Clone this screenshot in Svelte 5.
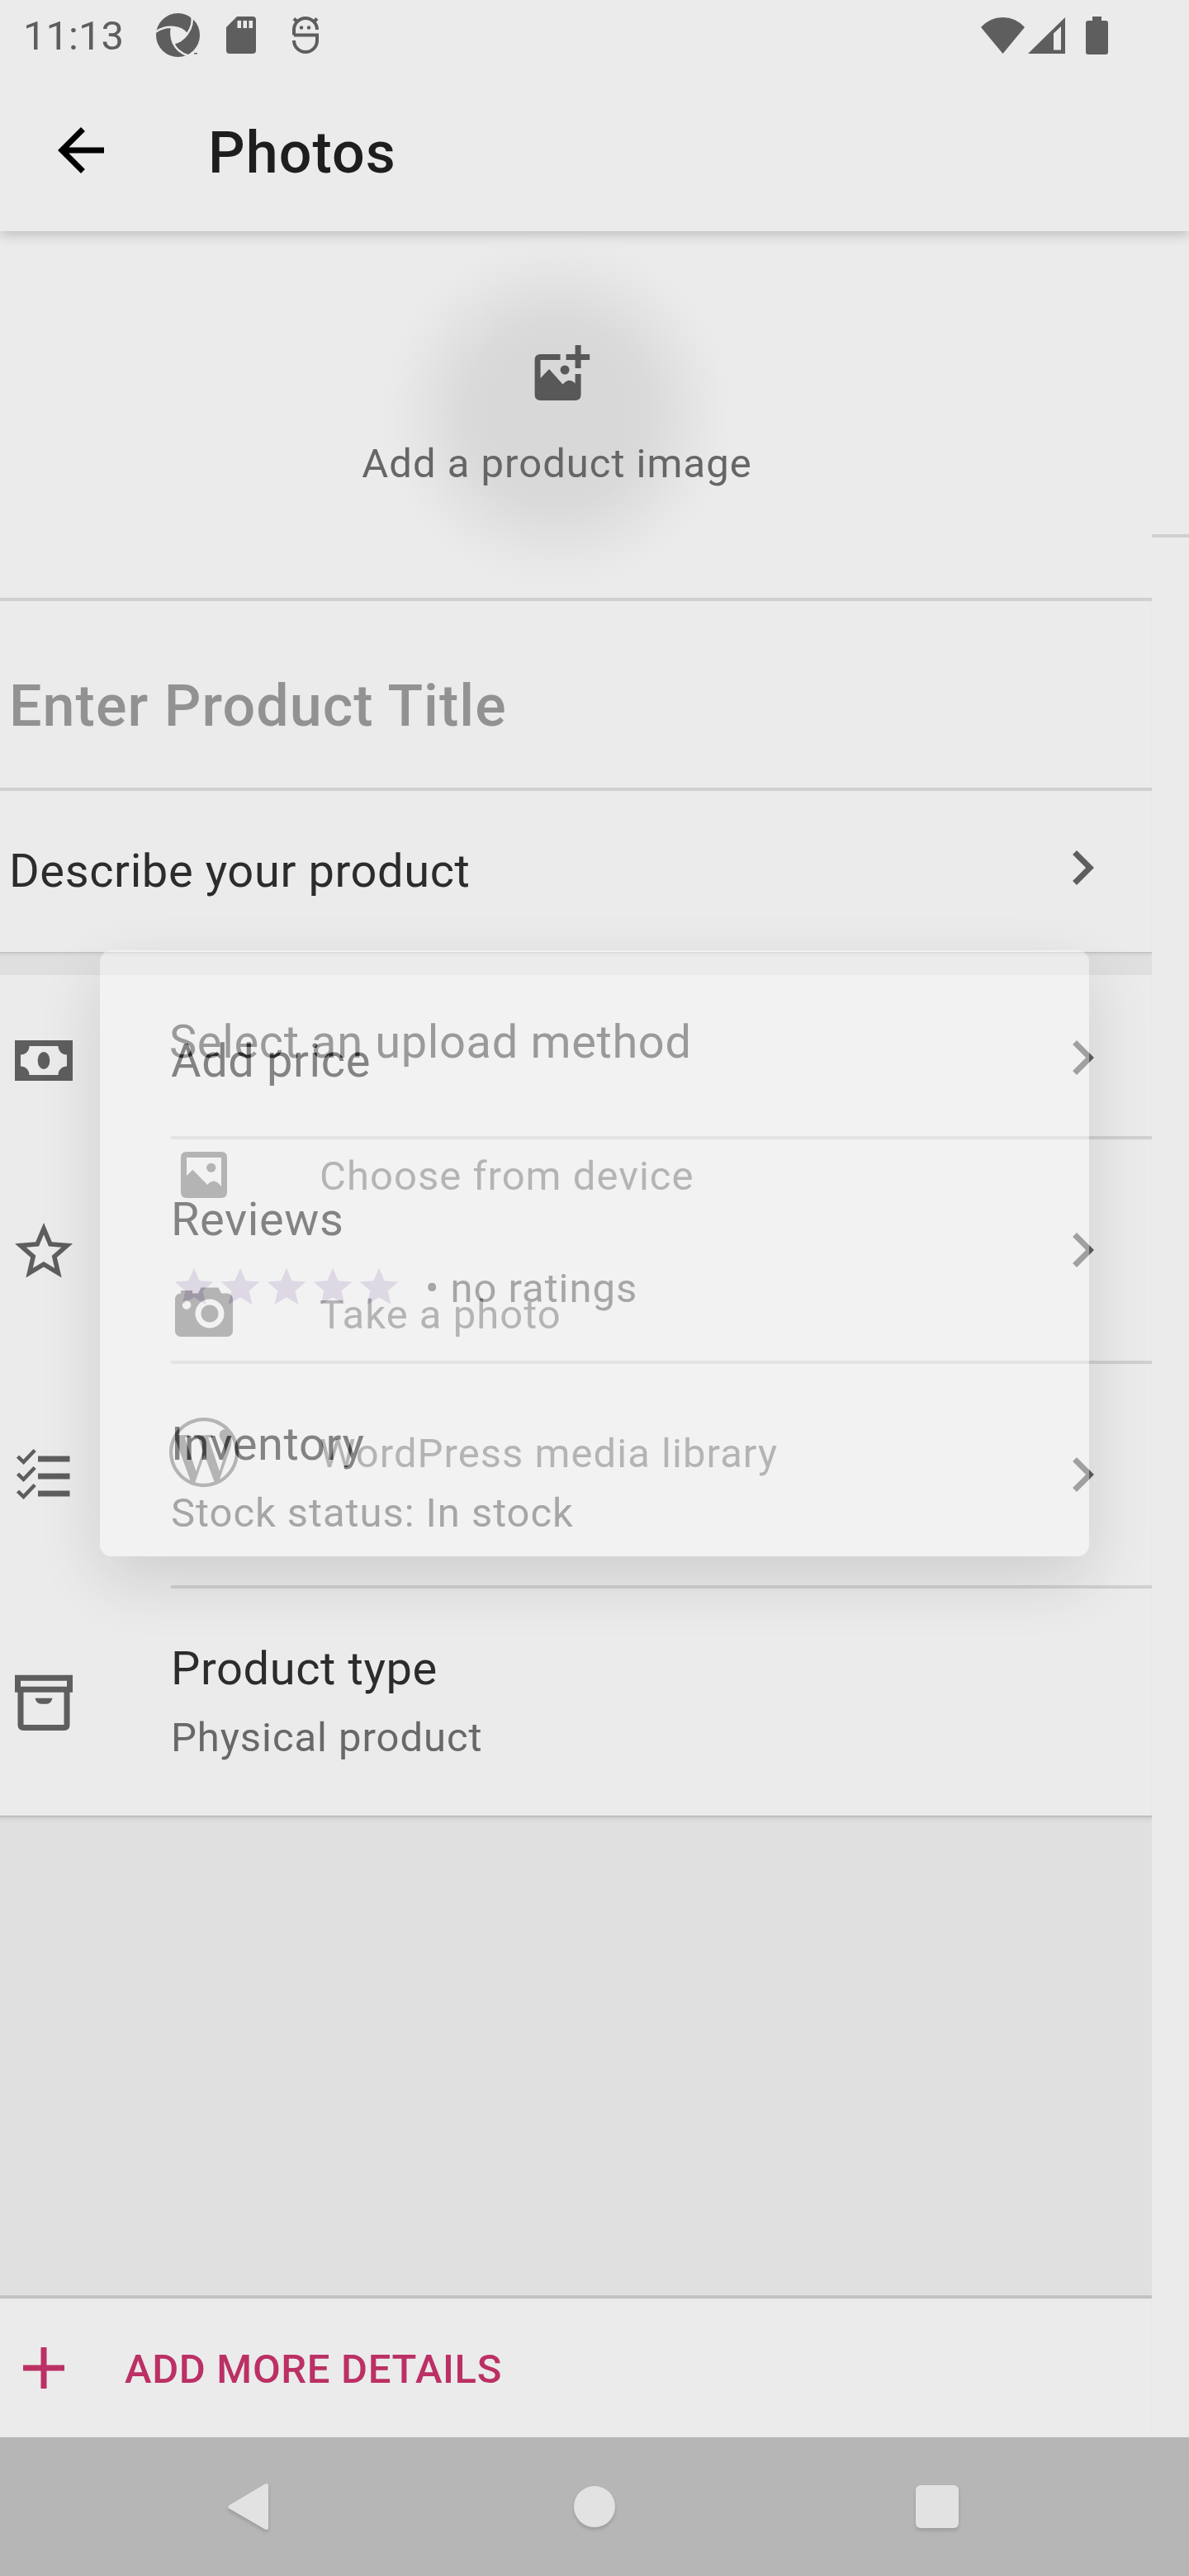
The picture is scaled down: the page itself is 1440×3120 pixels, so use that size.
<script>
  const sections = [
    { icon: 'cash', title: 'Add price', kind: 'price', chevron: true },
    { icon: 'star', title: 'Reviews', kind: 'reviews', note: '• no ratings', chevron: true },
    { icon: 'list', title: 'Inventory', kind: 'inventory', note: 'Stock status: In stock', chevron: true },
    { icon: 'box', title: 'Product type', kind: 'type', note: 'Physical product', chevron: false }
  ];
  const uploads = [
    { icon: 'image', label: 'Choose from device' },
    { icon: 'camera', label: 'Take a photo' },
    { icon: 'wordpress', label: 'WordPress media library' }
  ];
</script>

{#snippet chevron()}
  <svg class="icon chevron" viewBox="0 0 24 24"><path d="M8.590 16.590 13.170 12 8.590 7.410 10 6l6 6-6 6z" /></svg>
{/snippet}

<div class="screen">
  <header class="top">
    <div class="status">
      <span class="time">11:13</span>
      <svg class="aperture" viewBox="0 0 54 54">
        <circle cx="26.500" cy="26.500" r="26.500" />
        <path class="cut" d="M19 17.500Q17.500 27 21 36.500Q31 34 37.500 25.500Q31 17 19 17.500Z" />
        <path class="line" d="M0 22.500Q10 15.500 22 17Q32 18 37.500 25.500M43 2Q46 14 37.500 25.500Q31 34.500 21 36.500M38 51Q26 47 21 36.500Q17 27 19 17.500" />
        <path class="cut" d="M36 52 43 48H54V54H36Z" />
        <path d="M46 48H50V49.500H46Z" />
      </svg>
      <svg class="sd" viewBox="0 0 36 45">
        <path fill-rule="evenodd" d="M13 0H32Q36 0 36 4V41Q36 45 32 45H4Q0 45 0 41V13ZM13.500 5V14H18V5ZM20.500 5V14H25V5ZM27.500 5V14H32V5Z" />
      </svg>
      <svg class="creature" viewBox="0 0 32 45">
        <path class="stroke" d="M2 22.500V16A14 14 0 0 1 30 16M2 22.500H30V29A14 14 0 0 1 2 29M5.500 6 2 2.500M26.500 6 30 2.500" />
        <circle cx="11" cy="13.500" r="2.200" /><circle cx="20" cy="13.500" r="2.200" />
      </svg>
      <span class="spacer"></span>
      <svg class="wifi" viewBox="0 0 53 44"><path d="M0 12Q11 0 26.500 0T53 12L26.500 44Z" /></svg>
      <svg class="signal" viewBox="0 0 45 44"><path fill-rule="evenodd" d="M45 0V44H0ZM31 19.500V39.500H40V11Z" /></svg>
      <svg class="battery" viewBox="0 0 27 46"><path d="M8 0H19V5H24Q27 5 27 8V43Q27 46 24 46H3Q0 46 0 43V8Q0 5 3 5H8Z" /></svg>
    </div>
    <div class="appbar">
      <svg class="icon back" viewBox="0 0 24 24"><path d="M20 11H7.830l5.590-5.590L12 4l-8 8 8 8 1.410-1.410L7.830 13H20z" /></svg>
      <h1>Photos</h1>
    </div>
  </header>

  <div class="body">
    <main>
      <section class="photo">
        <svg class="addimage" viewBox="-12.600 0 79.200 67">
          <path fill-rule="evenodd" d="M7 11H31V18H7V40L17.500 29 34 47.500Q41.500 38.500 49 46.500V35H56V60Q56 67 49 67H7Q0 67 0 60V18Q0 11 7 11Z" />
          <path d="M49 0H56V11H66.600V18H56V28H49V18H38V11H49Z" />
          <circle cx="36.500" cy="30" r="5.500" />
        </svg>
        <p>Add a product image</p>
      </section>
      <section class="title edged">Enter Product Title</section>
      <section class="describe edged"><span>Describe your product</span>{@render chevron()}</section>
      <div class="gap"></div>

      <div class="details edged">
        {#each sections as row}
          <section class="row {row.kind}">
            <svg class="icon" viewBox="0 0 24 24">
              {#if row.icon === 'cash'}
                <path fill-rule="evenodd" d="M2 6H22V20H2ZM7 8C7 9.700 5.700 11 4 11V15C5.700 15 7 16.300 7 18H17C17 16.300 18.300 15 20 15V11C18.300 11 17 9.700 17 8Z" />
                <ellipse cx="12" cy="13" rx="2.100" ry="3" />
              {:else if row.icon === 'star'}
                <path d="M22 9.240l-7.190-.62L12 2 9.190 8.630 2 9.240l5.460 4.730L5.820 21 12 17.270 18.180 21l-1.630-7.030L22 9.240zM12 15.400l-3.760 2.270 1-4.280-3.320-2.880 4.380-.38L12 6.100l1.710 4.040 4.380.38-3.320 2.880 1 4.280L12 15.400z" />
              {:else if row.icon === 'list'}
                <path d="M10 5H21V7H10ZM10 11H21V13H10ZM10 17H21V19H10Z" />
                <path class="checks" d="M3 5.200 5 7.100 8.900 3M3 11.200 5 13.100 8.900 9M3 17.200 5 19.100 8.900 15" />
              {:else}
                <path fill-rule="evenodd" d="M2 2.500H22V8.500H21V19.700Q21 21.700 19 21.700H5Q3 21.700 3 19.700V8.500H2ZM4 4.500V6.500H20V4.500ZM5 8.500V19.700H19V8.500ZM9 10.500H15Q14.500 12.500 13 12.500H11Q9.500 12.500 9 10.500Z" />
              {/if}
            </svg>
            <div class="content">
              <div class="text">
                <h2>{row.title}</h2>
                {#if row.kind === 'reviews'}
                  <div class="rating">
                    {#each Array(5) as _}
                      <svg class="ratingstar" viewBox="0 0 24 24"><path d="M12 17.270 18.180 21l-1.640-7.030L22 9.240l-7.190-.61L12 2 9.190 8.630 2 9.240l5.460 4.730L5.820 21z" /></svg>
                    {/each}
                    <span class="note">{row.note}</span>
                  </div>
                {:else if row.note}
                  <p>{row.note}</p>
                {/if}
              </div>
              {#if row.chevron}{@render chevron()}{/if}
            </div>
          </section>
        {/each}
      </div>

      <div class="void"></div>

      <button class="more edged">
        <svg class="plus" viewBox="0 0 50 50"><path d="M21.500 0H28.500V21.500H50V28.500H28.500V50H21.500V28.500H0V21.500H21.500Z" /></svg>
        <span>ADD MORE DETAILS</span>
      </button>
    </main>
    <aside><div class="rule"></div></aside>
  </div>

  <nav>
    <svg viewBox="0 0 70 70"><path d="M8 33 51 7.500Q55 6 55 10V60Q55 64 51 62.500L8 37.500Q4.500 35.500 8 33Z" /></svg>
    <svg viewBox="0 0 70 70"><circle cx="35" cy="35" r="25" /></svg>
    <svg viewBox="0 0 70 70"><rect x="9" y="9" width="52" height="52" rx="6" /></svg>
  </nav>

  <div class="dialog">
    <h3>Select an upload method</h3>
    {#each uploads as item}
      <div class="option">
        <svg class="icon" viewBox="0 0 24 24">
          {#if item.icon === 'image'}
            <path fill-rule="evenodd" d="M6 4H18Q20 4 20 6V18Q20 20 18 20H6Q4 20 4 18V6Q4 4 6 4ZM6 6V12.300L8.100 10.200 13.200 15.400Q15.500 12.600 18 16V6Z" />
            <circle cx="14.500" cy="9.500" r="1.600" />
          {:else if item.icon === 'camera'}
            <path fill-rule="evenodd" d="M17 12c0 1.700-1.300 3-3 3s-3-1.300-3-3 1.300-3 3-3 3 1.300 3 3zm5-5v11c0 1.100-.9 2-2 2H4c-1.100 0-2-.9-2-2V7c0-1.100.9-2 2-2V4h4v1h2l1-2h6l1 2h2c1.100 0 2 .9 2 2zM7.500 9c0-.830-.670-1.500-1.500-1.500S4.500 8.170 4.500 9s.670 1.500 1.500 1.500S7.500 9.830 7.500 9zM19 12c0-2.760-2.240-5-5-5s-5 2.240-5 5 2.240 5 5 5 5-2.240 5-5z" />
          {:else}
            <path fill-rule="evenodd" d="M21.469 6.825c.84 1.537 1.318 3.300 1.318 5.175 0 3.979-2.156 7.456-5.363 9.325l3.295-9.527c.615-1.540.82-2.771.82-3.864 0-.405-.026-.780-.070-1.110m-7.981.105c.647-.030 1.232-.105 1.232-.105.582-.075.514-.930-.067-.899 0 0-1.755.135-2.880.135-1.064 0-2.850-.150-2.850-.150-.585-.030-.661.855-.075.885 0 0 .540.061 1.125.090l1.680 4.605-2.370 7.080L5.354 6.900c.649-.030 1.234-.100 1.234-.100.585-.075.516-.930-.065-.896 0 0-1.746.138-2.874.138-.200 0-.438-.008-.690-.015C4.911 3.150 8.235 1.215 12 1.215c2.809 0 5.365 1.072 7.286 2.833-.046-.003-.091-.009-.141-.009-1.060 0-1.812.923-1.812 1.914 0 .890.513 1.643 1.060 2.531.411.720.890 1.643.890 2.977 0 .915-.354 1.994-.821 3.479l-1.075 3.585-3.900-11.610.001.014zM12 22.784c-1.059 0-2.081-.153-3.048-.437l3.237-9.406 3.315 9.087c.024.053.050.101.078.149-1.120.393-2.325.609-3.582.609M1.211 12c0-1.564.336-3.050.935-4.390L7.290 21.709C3.694 19.960 1.212 16.271 1.211 12M12 0C5.385 0 0 5.385 0 12s5.385 12 12 12 12-5.385 12-12S18.615 0 12 0" />
          {/if}
        </svg>
        <span>{item.label}</span>
      </div>
    {/each}
  </div>
</div>

<style>
  :global(body) { margin: 0; background: #ebebeb; }
  * { box-sizing: border-box; }
  h1, h2, h3, p { margin: 0; font-weight: 400; }
  svg { display: block; flex: none; fill: #5e5e5e; overflow: visible; }
  .screen { position: relative; width: 1440px; height: 3120px; overflow: hidden; display: flex; flex-direction: column; background: #ebebeb; color: #2c2c2c; font-family: Roboto, sans-serif; white-space: nowrap; }
  .icon { width: 84px; height: 84px; }

  .top { position: relative; z-index: 1; height: 280px; background: #ebebeb; box-shadow: 0 4px 14px rgba(0, 0, 0, .2); }
  .status { display: flex; align-items: center; height: 84px; padding: 1px 98px 0 28px; color: #5e5e5e; }
  .time { font-size: 49px; line-height: 58px; width: 161px; padding-top: 2px; }
  .aperture { width: 54px; height: 54px; }
  .cut { fill: #ebebeb; }
  .line { fill: none; stroke: #ebebeb; stroke-width: 2.500; }
  .sd { width: 36px; height: 45px; margin-left: 31px; }
  .creature { width: 32px; height: 45px; margin-left: 44px; }
  .stroke { fill: none; stroke: #5e5e5e; stroke-width: 4; }
  .spacer { flex: 1; }
  .wifi { width: 53px; height: 44px; }
  .signal { width: 45px; height: 44px; margin-left: 4px; }
  .battery { width: 27px; height: 46px; margin-left: 25px; }
  .appbar { display: flex; padding: 56px 56px 0; }
  .back { fill: #000; }
  h1 { margin: 3px 0 0 112px; font-size: 70px; font-weight: 500; line-height: 84px; letter-spacing: 1.050px; color: #1e1e1e; }

  .body { flex: 1; display: flex; }
  main { width: 1395px; display: flex; flex-direction: column; }
  .edged { box-shadow: inset -1px 0 #e7e7e7; }
  aside { flex: 1; padding-top: 367px; }
  .rule { height: 4px; background: #d0d0d0; }

  .photo { height: 448px; border-bottom: 4px solid #d0d0d0; padding: 138px 46px 0 0; display: flex; flex-direction: column; align-items: center; gap: 48px; background: radial-gradient(circle at 675px 220px, #d8d8d8 0, #d8d8d8 80px, #dadada 110px, #e0e0e0 143px, #e6e6e6 175px, #eaeaea 203px, #ebebeb 220px); }
  .addimage { width: 79.200px; height: 67px; fill: #585858; }
  .photo p { font-size: 49px; line-height: 58px; letter-spacing: 1px; color: #666; }
  .title { height: 230px; border-bottom: 4px solid #d0d0d0; padding: 85px 11px 0; font-size: 70px; font-weight: 500; line-height: 84px; letter-spacing: 1.050px; color: #929292; }
  .describe { height: 195px; display: flex; justify-content: space-between; padding: 64px 42px 0 11px; font-size: 56px; line-height: 66px; letter-spacing: .6px; }
  .describe .chevron { margin-top: -13px; }
  .gap { height: 28px; background: linear-gradient(#bcbcbc, #d4d4d4 2px, #dfdfdf 6px); }
  .row { display: flex; gap: 112px; padding-left: 11px; align-items: center; height: 272px; }
  .row.price { height: 199px; }
  .row.type { height: 275px; }
  .content { flex: 1; align-self: stretch; display: flex; align-items: center; justify-content: space-between; padding-right: 42px; border-bottom: 4px solid #d0d0d0; }
  .type .content { border-bottom: 0; }
  .text { align-self: flex-start; padding-top: 64px; }
  .price .text { padding-top: 71px; }
  .price .chevron { margin-top: 5px; }
  h2 { font-size: 56px; line-height: 66px; letter-spacing: .6px; }
  .text p, .rating { margin-top: 22px; font-size: 49px; line-height: 58px; letter-spacing: .93px; color: #686868; }
  .rating { display: flex; }
  .ratingstar { width: 56px; height: 56px; margin-top: -1px; fill: #c6bdd2; }
  .note { margin-left: 28px; }
  .checks { fill: none; stroke: #5e5e5e; stroke-width: 1.300; }

  .void { height: 581px; background: linear-gradient(#b0b0b0, #cdcdcd 2px, #dadada 5px, #e0e0e0 9px); }
  .more { display: flex; align-items: center; width: 100%; height: 172px; border: 0; border-top: 4px solid #c2c2c2; background: none; padding: 0 0 0 28px; color: #bb3065; font: 500 49px/58px Roboto, sans-serif; letter-spacing: .68px; }
  .more span { padding-top: 4px; }
  .plus { width: 50px; height: 50px; margin-right: 73px; fill: #bb3065; }

  nav { position: relative; height: 168px; background: #b6b6b6; display: flex; justify-content: center; align-items: center; gap: 345px; }
  nav svg { width: 70px; height: 70px; fill: #e2e2e2; filter: drop-shadow(0 3px 2px rgba(0, 0, 0, .15)); }

  /* The dialog is part-way through its fade-in over the product form. */
  .dialog { position: absolute; left: 121px; top: 1151px; width: 1198px; height: 734px; border-radius: 14px; background: #fefefe; box-shadow: 0 28px 80px rgba(0, 0, 0, .3); opacity: .414; padding: 78px 84px 0 84px; }
  h3 { font-size: 56px; line-height: 66px; letter-spacing: .62px; color: #2a2a2a; margin-bottom: 44px; }
  .option { display: flex; align-items: center; gap: 98px; height: 168px; font-size: 49px; line-height: 58px; letter-spacing: 1.030px; color: #696969; }
  .option svg { fill: #696969; }
  .option span { padding-top: 4px; }
</style>
